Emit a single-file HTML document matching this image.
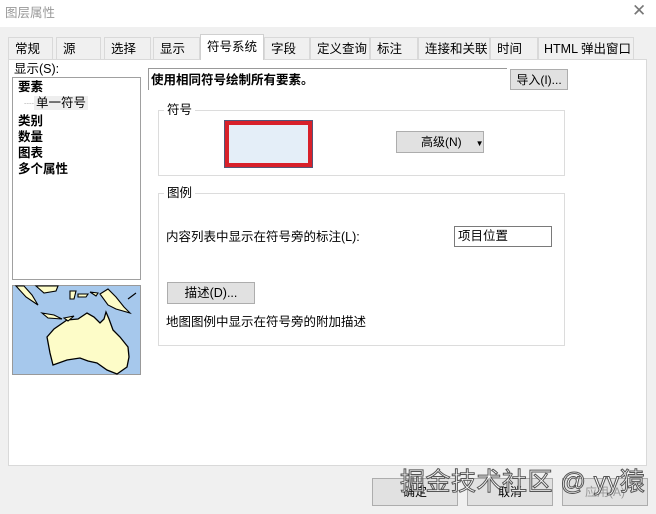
<!DOCTYPE html>
<html><head><meta charset="utf-8"><style>
*{box-sizing:border-box;margin:0;padding:0}
body{width:656px;height:514px;background:#f0f0f0;font-family:"Liberation Sans","Noto Sans CJK SC",sans-serif;font-size:12px;line-height:16px;color:#000;position:relative;overflow:hidden}
.a{position:absolute;white-space:nowrap}
.tab{position:absolute;top:37px;height:22px;border:1px solid #d9d9d9;border-bottom:none;background:#f0f0f0;padding:3px 0 0 6px;font-size:12.5px;line-height:16px;white-space:nowrap}
.btn{position:absolute;background:#e1e1e1;border:1px solid #adadad;text-align:center;white-space:nowrap;line-height:16px}
.grp{position:absolute;border:1px solid #dcdcdc}
.gl{position:absolute;background:#fff;padding:0 3px;font-size:12.5px;line-height:16px}
b{font-weight:bold}
</style></head><body>
<div class="a" style="left:0;top:0;width:656px;height:27px;background:#fff"></div>
<div class="a" style="left:5px;top:5px;color:#999;font-size:12.5px">图层属性</div>
<div class="a" style="left:632px;top:3px;color:#777;font-size:17px">✕</div>
<div class="a" style="left:8px;top:59px;width:639px;height:407px;background:#fff;border:1px solid #d9d9d9"></div>
<div class="tab" style="left:8px;width:45px">常规</div>
<div class="tab" style="left:56px;width:45px">源</div>
<div class="tab" style="left:104px;width:47px">选择</div>
<div class="tab" style="left:153px;width:47px">显示</div>
<div class="tab" style="left:200px;top:34px;height:26px;width:64px;background:#fff;border-color:#d0d0d0;padding-top:4px">符号系统</div>
<div class="tab" style="left:264px;width:46px">字段</div>
<div class="tab" style="left:310px;width:60px">定义查询</div>
<div class="tab" style="left:370px;width:48px">标注</div>
<div class="tab" style="left:418px;width:72px">连接和关联</div>
<div class="tab" style="left:490px;width:48px">时间</div>
<div class="tab" style="left:538px;width:96px;padding-left:5px">HTML 弹出窗口</div>
<div class="a" style="left:14px;top:61px;font-size:12.5px">显示(S):</div>
<div class="a" style="left:12px;top:77px;width:129px;height:203px;border:1px solid #a0a0a0;background:#fff"></div>
<div class="a" style="left:18px;top:79px;line-height:16px;font-size:12.5px"><b>要素</b><br><span style="color:#888;font-size:10px;margin-left:6px">┈</span><span style="background:#eee;padding:0 2px">单一符号</span><br><b>类别</b><br><b>数量</b><br><b>图表</b><br><b>多个属性</b></div>
<svg class="a" style="left:12px;top:285px" width="129" height="90" viewBox="0 0 129 90">
<rect x="0.5" y="0.5" width="128" height="89" fill="#a6c8ec" stroke="#999"/>
<path d="M35 52 L42 44 L55 35 L66 34 L75 28 L82 32 L88 38 L92 34 L94 27 L97 34 L101 45 L108 52 L116 62 L117 72 L115 82 L105 89 L95 85 L85 78 L76 76 L68 73 L55 75 L41 80 L38 68 Z" fill="#fdfcc8" stroke="#000" stroke-width="1.3"/>
<path d="M4 1 L14 12 L26 20 L20 10 L12 1 Z M24 1 L32 8 L44 6 L46 1 Z M30 28 L42 30 L50 34 L36 33 Z M52 33 L62 31 L56 36 Z M58 6 L64 6 L62 14 L58 14 Z M66 9 L76 9 L74 12 L66 12 Z M78 7 L86 8 L84 11 Z M88 9 L96 4 L104 12 L112 22 L118 28 L104 24 L96 20 Z M116 14 L124 8" fill="#fdfcc8" stroke="#000" stroke-width="1.1"/>
</svg>
<div class="a" style="left:148px;top:68px;width:359px;height:22px;border-top:1px solid #999;border-left:1px solid #999;padding:3px 0 0 2px;font-weight:bold;font-size:12.5px">使用相同符号绘制所有要素。</div>
<div class="btn" style="left:510px;top:69px;width:58px;height:21px;padding-top:2px">导入(I)...</div>
<div class="grp" style="left:158px;top:110px;width:407px;height:66px"></div>
<div class="gl" style="left:164px;top:102px">符号</div>
<div class="a" style="left:225px;top:121px;width:87px;height:46px;background:#e4eef8;border:4px solid #d8202a;outline:1px solid #557;"></div>
<div class="btn" style="left:396px;top:131px;width:88px;height:22px;padding-top:2px;text-align:left;padding-left:24px">高级(N)<span style="font-size:8px;margin-left:14px">▼</span></div>
<div class="grp" style="left:158px;top:193px;width:407px;height:153px"></div>
<div class="gl" style="left:164px;top:185px">图例</div>
<div class="a" style="left:166px;top:229px;font-size:12.5px">内容列表中显示在符号旁的标注(L):</div>
<div class="a" style="left:454px;top:226px;width:98px;height:21px;border:1px solid #7a7a7a;padding:1px 3px;font-size:12.5px">项目位置</div>
<div class="btn" style="left:167px;top:282px;width:88px;height:22px;padding-top:2px;font-size:12.5px">描述(D)...</div>
<div class="a" style="left:166px;top:314px;font-size:12.5px">地图图例中显示在符号旁的附加描述</div>
<div class="btn" style="left:372px;top:478px;width:86px;height:28px;padding-top:5px">确定</div>
<div class="btn" style="left:467px;top:478px;width:86px;height:28px;padding-top:5px">取消</div>
<div class="btn" style="left:562px;top:478px;width:86px;height:28px;padding-top:5px;color:#999">应用(A)</div>
<div class="a" style="left:400px;top:466px;font-size:25px;line-height:32px;color:#fff;-webkit-text-stroke:1px #555;letter-spacing:0.5px">掘金技术社区 @ yy猿</div>
</body></html>
